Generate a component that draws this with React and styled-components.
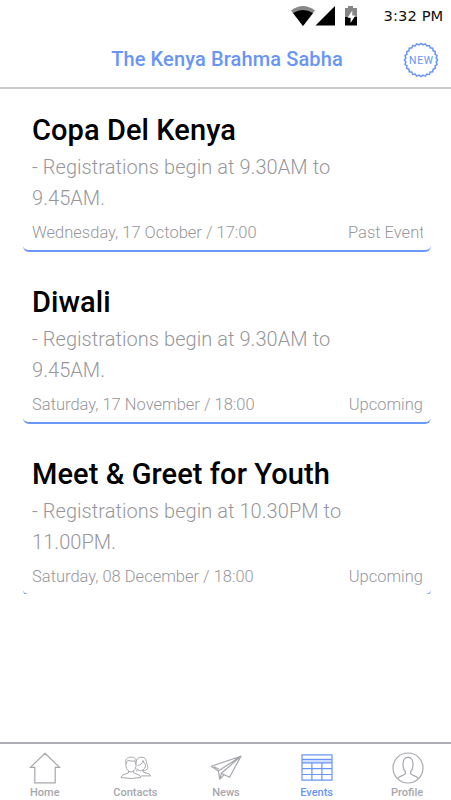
import styled, { createGlobalStyle } from 'styled-components';

const GlobalStyle = createGlobalStyle`
  * {
    box-sizing: border-box;
  }
  body {
    margin: 0;
    background: #fff;
    font-family: Roboto, "Liberation Sans", sans-serif;
  }
`

const Screen = styled.div`
  display: flex;
  flex-direction: column;
  width: 451px;
  height: 800px;
  overflow: hidden;
  background: #fff;
`
const StatusBar = styled.div`
  display: flex;
  align-items: center;
  height: 32px;
  padding-left: 290px;
`
const Clock = styled.span`
  margin-left: 23.5px;
  font-family: "DejaVu Sans", sans-serif;
  font-size: 14.7px;
  line-height: 32px;
  letter-spacing: 0.1px;
  color: #111;
  white-space: nowrap;
`
const Header = styled.header`
  display: grid;
  grid-template-columns: 54px 1fr 54px;
  align-items: center;
  height: 57px;
  border-bottom: 2px solid #cbcbce;
`
const HeaderTitle = styled.h1`
  grid-column: 2;
  margin: 0;
  padding: 0 0 1px 3px;
  font-size: 20px;
  font-weight: 500;
  line-height: 24px;
  letter-spacing: 0.12px;
  text-align: center;
  white-space: nowrap;
  color: #6895f6;
`
const List = styled.main`
  flex: 1;
  display: flex;
  flex-direction: column;
  gap: 22px;
  padding: 13px 20px 0 23px;
`
const Card = styled.article`
  flex: none;
  height: 150px;
  padding: 10px 8px 0 9px;
  border-bottom: 2px solid #6b97f6;
  border-radius: 6px;
  ${(p) => p.$cut && 'clip-path: inset(0 0 2px 0);'}
`
const CardTitle = styled.h2`
  margin: 0;
  font-size: 29px;
  font-weight: 500;
  line-height: 36px;
  letter-spacing: 0.08px;
  color: #000;
`
const CardText = styled.p`
  width: 330px;
  margin: 4px 0 9px;
  font-size: 20px;
  font-weight: 300;
  line-height: 31px;
  letter-spacing: 0.06px;
  color: #97979b;
`
const CardFooter = styled.div`
  display: flex;
  justify-content: space-between;
  font-size: 16.5px;
  font-weight: 300;
  line-height: 20px;
  white-space: nowrap;
  color: #97979b;
`
const Status = styled.span`
  max-width: 75px;
  overflow: hidden;
`
const TabBar = styled.nav`
  display: grid;
  grid-template-columns: repeat(5, 90.6px);
  height: 58px;
  border-top: 2px solid #adadb3;
`
const Tab = styled.div`
  display: flex;
  flex-direction: column;
  align-items: center;
  padding-top: 8px;
  font-size: 11px;
  font-weight: 500;
  line-height: 14px;
  color: ${(p) => (p.$active ? '#6895f6' : '#a6a7ad')};

  svg {
    display: block;
    margin-bottom: 2px;
  }
`
const Label = styled.span`
  margin-right: 1px;
`
const Icon = styled.svg`
  fill: none;
  stroke: currentColor;
  stroke-width: 1.2;
`
const ThinIcon = styled(Icon)`
  stroke-width: 1;
`
const Badge = styled.svg`
  color: #6895f6;
  margin-left: 6px;
  margin-bottom: -1px;
`

const StatusIcons = () => (
  <svg width="70" height="32" viewBox="0 0 70 32">
    <path d="M1 10.5Q13 1.5 25 10.5L13 26Z" fill="#888" />
    <path d="M3 13Q13 6.800 23 13L13 26Z" fill="#000" />
    <path d="M45 6V25.500H25.500Z" fill="#000" />
    <path d="M58 6h5v2h4v9H55V8h3Z" fill="#858585" />
    <path d="M55 17h12v8.500H55Z" fill="#000" />
    <path d="M62.300 10.500 57.600 17.700h3v5.200l4.800-7.300h-3.100Z" fill="#fff" />
  </svg>
)

// scalloped outline, 24 teeth round the centre
const seal = Array.from({ length: 96 }, (_, i) => {
  const a = (i / 96) * Math.PI * 2
  const r = 15.9 + 0.7 * Math.cos(a * 24)
  return `${(18 + r * Math.cos(a)).toFixed(2)},${(18 + r * Math.sin(a)).toFixed(2)}`
}).join(' ')

const NewBadge = () => (
  <Badge width="36" height="36" viewBox="0 0 36 36">
    <polygon points={seal} fill="none" stroke="currentColor" strokeWidth="1.5" />
    <text x="18.4" y="21.8" textAnchor="middle" fontSize="10.4" fontWeight="400" letterSpacing="0.8" fill="currentColor">NEW</text>
  </Badge>
)

const HomeIcon = () => (
  <Icon width="32" height="32" viewBox="0 0 32 32">
    <path d="M16 1.300 30.500 15.300H26.200V30.800H5.800V15.300H1.500Z" />
  </Icon>
)

const ContactsIcon = () => (
  <ThinIcon width="32" height="32" viewBox="0 0 32 32">
    <path d="M6 12C4.700 7.500 7 5.200 11 5.200S17.300 7.500 16 12c.5 4-2 8-5 8s-5.500-4-5-8Z" />
    <path d="M6.500 12c0-2 .6-3.500 2.500-3.500 2 .8 4 .8 6 .3l.6 3.200M8.500 18.500v2.300L2.800 23Q1.200 23.700 1.200 25.500q9.800 2 19.400 0 0-2-1.600-2.500l-5.500-2.200v-2.300" />
    <path d="M16.200 9C17 6.500 19.500 5 22 5.200c3.500.2 4.200 3 4.500 5.500.8 3 2.500 5 0 7-1.600 1.100-3.200.8-4 .3-2 1.500-4.500.5-5.500-1.500" />
    <path d="M17.500 13.500c3-.5 5-2 5.500-5 .5 2.500 2.500 3 2.500 5 0 2-1.500 4-3 4.500M23 18v2l5.500 1.700q2 .7 2 2.200h-9.300M17 17v2.500" />
  </ThinIcon>
)

const NewsIcon = () => (
  <Icon width="32" height="32" viewBox="0 0 32 32" strokeLinejoin="round">
    <path d="M31 4.200 1.300 14.200 8.300 19 31 4.200 19.500 25.300 11.300 21.300 31 4.200M8.300 19l1.500 8.200 1.500-5.900M9.800 27.200 14 22.800M4 14.800l5 2.500" />
  </Icon>
)

const EventsIcon = () => (
  <Icon width="32" height="32" viewBox="0 0 32 32">
    <path fill="#cfdffd" stroke="none" d="M1 7.500h30v3.500H1Z" />
    <path d="M1 2.900h30v4.500H1ZM1 10.900h30v17.300H1ZM1 7.500v4M31 7.500v4M1 16.700h30M1 22.500h30M10.900 10.900v17.300M20.900 10.900v17.300" />
  </Icon>
)

const ProfileIcon = () => (
  <Icon width="32" height="32" viewBox="0 0 32 32">
    <circle cx="16" cy="16" r="15" />
    <path d="M5.500 26.700C6.500 24 12.500 23.500 13.300 21.700V19.500C11.500 18 11.400 16 11.100 14.500 10.600 8 12.300 5.300 16 5.300s5.400 2.700 4.900 9.200c-.3 1.500-.4 3.500-2.200 5v2.200c.8 1.800 6.800 2.300 7.800 5" />
  </Icon>
)

const events = [
  { title: 'Copa Del Kenya', text: '- Registrations begin at 9.30AM to 9.45AM.', date: 'Wednesday, 17 October / 17:00', status: 'Past Event' },
  { title: 'Diwali', text: '- Registrations begin at 9.30AM to 9.45AM.', date: 'Saturday, 17 November / 18:00', status: 'Upcoming' },
  { title: 'Meet & Greet for Youth', text: '- Registrations begin at 10.30PM to 11.00PM.', date: 'Saturday, 08 December / 18:00', status: 'Upcoming' },
]

const tabs = [
  { label: 'Home', icon: <HomeIcon /> },
  { label: 'Contacts', icon: <ContactsIcon /> },
  { label: 'News', icon: <NewsIcon /> },
  { label: 'Events', icon: <EventsIcon />, active: true },
  { label: 'Profile', icon: <ProfileIcon /> },
]

const App = () => {
  return (
    <>
      <GlobalStyle />
      <Screen>
        <StatusBar>
          <StatusIcons />
          <Clock>3:32 PM</Clock>
        </StatusBar>
        <Header>
          <HeaderTitle>The Kenya Brahma Sabha</HeaderTitle>
          <NewBadge />
        </Header>
        <List>
          {events.map((e, i) => (
            <Card key={e.title} $cut={i === events.length - 1}>
              <CardTitle>{e.title}</CardTitle>
              <CardText>{e.text}</CardText>
              <CardFooter>
                <span>{e.date}</span>
                <Status>{e.status}</Status>
              </CardFooter>
            </Card>
          ))}
        </List>
        <TabBar>
          {tabs.map((t) => (
            <Tab key={t.label} $active={t.active}>
              {t.icon}
              <Label>{t.label}</Label>
            </Tab>
          ))}
        </TabBar>
      </Screen>
    </>
  )
}

export default App
